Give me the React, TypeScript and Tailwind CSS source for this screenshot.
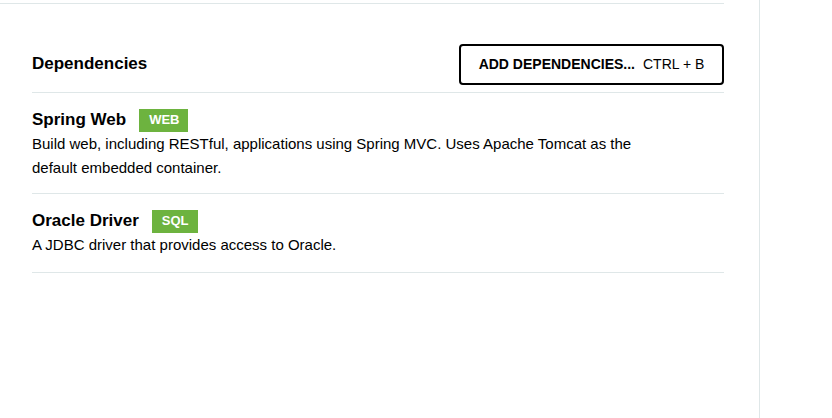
import React from "react"

interface Dep {
  name: string
  tag: string
  desc: string
}

const deps: Dep[] = [
  {
    name: "Spring Web",
    tag: "WEB",
    desc: "Build web, including RESTful, applications using Spring MVC. Uses Apache Tomcat as the default embedded container.",
  },
  {
    name: "Oracle Driver",
    tag: "SQL",
    desc: "A JDBC driver that provides access to Oracle.",
  },
]

export default function App() {
  return (
    <div className="flex h-[418px] w-[832px] bg-white text-black" style={{ fontFamily: '"Liberation Sans", Arial, sans-serif' }}>
      <div className="w-[760px] border-r border-[#dfe7e8]">
        <div className="mt-[3px] w-[724px] border-t border-[#dfe7e8]">
          <div className="pl-[32px] pt-[40px]">
            <div className="flex h-[49px] items-start justify-between border-b border-[#dfe7e8]">
              <h2 className="mt-[10px] text-[17px] font-bold leading-5">Dependencies</h2>
              <button className="flex h-[41px] w-[265px] items-center justify-center gap-[8px] rounded-[4px] border-2 border-black bg-white text-[14px]">
                <span className="font-bold">ADD DEPENDENCIES...</span>
                <span>CTRL + B</span>
              </button>
            </div>

            {deps.map((dep, index) => (
              <div className={index === deps.length - 1 ? "border-b border-[#dfe7e8] pt-[15px] pb-[15px]" : "border-b border-[#dfe7e8] pt-[15px] pb-[13px]"} key={index}>
                <div className="flex h-[24px] items-center gap-[13px]">
                  <span className="text-[17px] font-bold">{dep.name}</span>
                  <span className="flex h-[23px] items-center bg-[#6db33f] pl-[10px] pr-[9px] text-[13px] font-bold text-white">{dep.tag}</span>
                </div>
                <p className="max-w-[640px] text-[15px] leading-6">{dep.desc}</p>
              </div>
            ))}
          </div>
        </div>
      </div>
    </div>
  )
}
